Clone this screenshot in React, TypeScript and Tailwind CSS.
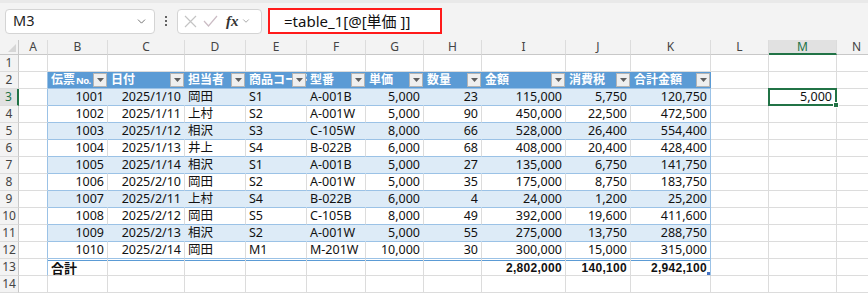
import { ChevronDown } from "lucide-react";

const COLS = [
  { k: "A", w: "w-[29px]" },
  { k: "B", w: "w-[60px]" },
  { k: "C", w: "w-[77px]" },
  { k: "D", w: "w-[61px]" },
  { k: "E", w: "w-[61px]" },
  { k: "F", w: "w-[59px]" },
  { k: "G", w: "w-[58px]" },
  { k: "H", w: "w-[58px]" },
  { k: "I", w: "w-[84px]" },
  { k: "J", w: "w-[65px]" },
  { k: "K", w: "w-[80px]" },
  { k: "L", w: "w-[58px]" },
  { k: "M", w: "w-[68px]" },
  { k: "N", w: "w-[40px]" },
];

const HEAD = ["伝票", "日付", "担当者", "商品コード", "型番", "単価", "数量", "金額", "消費税", "合計金額"];

// right aligned columns inside the table (B..K => 0..9)
const RIGHT = [true, true, false, false, false, true, true, true, true, true];

const DATA = [
  ["1001", "2025/1/10", "岡田", "S1", "A-001B", "5,000", "23", "115,000", "5,750", "120,750"],
  ["1002", "2025/1/11", "上村", "S2", "A-001W", "5,000", "90", "450,000", "22,500", "472,500"],
  ["1003", "2025/1/12", "相沢", "S3", "C-105W", "8,000", "66", "528,000", "26,400", "554,400"],
  ["1004", "2025/1/13", "井上", "S4", "B-022B", "6,000", "68", "408,000", "20,400", "428,400"],
  ["1005", "2025/1/14", "相沢", "S1", "A-001B", "5,000", "27", "135,000", "6,750", "141,750"],
  ["1006", "2025/2/10", "岡田", "S2", "A-001W", "5,000", "35", "175,000", "8,750", "183,750"],
  ["1007", "2025/2/11", "上村", "S4", "B-022B", "6,000", "4", "24,000", "1,200", "25,200"],
  ["1008", "2025/2/12", "岡田", "S5", "C-105B", "8,000", "49", "392,000", "19,600", "411,600"],
  ["1009", "2025/2/13", "相沢", "S2", "A-001W", "5,000", "55", "275,000", "13,750", "288,750"],
  ["1010", "2025/2/14", "岡田", "M1", "M-201W", "10,000", "30", "300,000", "15,000", "315,000"],
];

const TOTAL = ["合計", "", "", "", "", "", "", "2,802,000", "140,100", "2,942,100"];

const FONT = "font-['Noto_Sans','Noto_Sans_CJK_JP',sans-serif]";

function RowHead({ n, active }: { n: number; active?: boolean }) {
  return (
    <div
      className={`w-[19px] shrink-0 flex items-center justify-center text-[12px] leading-none border-b border-[#dcdcdc] ${
        active ? "bg-[#e1e1e1] text-[#217346] border-r-2 border-r-[#217346]" : "bg-[#f3f3f3] text-[#444] border-r border-r-[#c8c8c8]"
      }`}
    >
      {n}
    </div>
  );
}

function FilterBtn() {
  return (
    <div className="absolute right-[1px] top-[1px] w-[14px] h-[14px] bg-[#efefef] border border-[#b4b4b4] flex items-center justify-center">
      <svg width="7" height="4" viewBox="0 0 7 4">
        <path d="M0 0h7L3.5 4z" fill="#5f5f5f" />
      </svg>
    </div>
  );
}

function Cell({ row, col, text }: { row: number; col: number; text?: string }) {
  const t = col - 1; // table index
  const inTable = t >= 0 && t <= 9 && row >= 2 && row <= 13;
  const w = COLS[col].w;
  if (inTable) {
    if (row === 2) {
      return (
        <div className={`${w} shrink-0 relative bg-[#5b9bd5] text-white font-bold text-[12px] leading-none pl-[3px] flex items-center overflow-hidden whitespace-nowrap border-b border-[#9bc2e6]`}>
          {HEAD[t]}
          {t === 0 && <span className="text-[9.5px] tracking-[-0.6px] ml-[1px] mt-[1px]">No.</span>}
          <FilterBtn />
        </div>
      );
    }
    const band = row % 2 === 1 && row <= 11;
    const right = t === 9 ? "border-r border-r-[#9bc2e6]" : band ? "border-r border-r-[#ddebf7]" : "border-r border-r-[#dcdcdc]";
    const bottom = row === 13 ? "border-b border-b-[#dcdcdc]" : "border-b border-b-[#9bc2e6]";
    const isTotal = row === 13;
    const alignRight = RIGHT[t] && !(isTotal && t === 0);
    return (
      <div
        className={`${w} shrink-0 relative px-[3px] flex items-center overflow-hidden whitespace-nowrap leading-none ${right} ${bottom} ${
          band ? "bg-[#ddebf7]" : "bg-white"
        } ${alignRight ? "justify-end" : "justify-start"} ${
          isTotal && t > 0
            ? "font-['Liberation_Sans',sans-serif] font-bold text-[12px] tracking-[0.3px] pt-[2px]"
            : isTotal
            ? "font-bold text-[13px] pt-[2px]"
            : "text-[12.5px]"
        } text-[#111]`}
      >
        {text}
        {isTotal && <div className="absolute left-0 right-0 top-[1px] h-px bg-[#5b9bd5]" />}
        {isTotal && t === 9 && <div className="absolute right-0 bottom-0 w-[3px] h-[3px] bg-[#4472c4]" />}
      </div>
    );
  }
  const blueRight = col === 0 && row >= 2 && row <= 13;
  if (col === 12 && row === 3) {
    return (
      <div className={`${w} shrink-0 relative px-[4px] flex items-center justify-end text-[12.5px] leading-none text-[#111] border-r border-b border-[#dcdcdc]`}>
        5,000
        <div className="absolute -left-[1px] -top-[1px] -right-[1px] -bottom-[1px] border-2 border-[#217346]" />
        <div className="absolute -right-[3px] -bottom-[3px] w-[6px] h-[6px] bg-[#217346] border border-white" />
      </div>
    );
  }
  return (
    <div
      className={`${w} shrink-0 border-b border-b-[#dcdcdc] border-r ${blueRight ? "border-r-[#9bc2e6]" : "border-r-[#dcdcdc]"}`}
    />
  );
}

function GridRow({ n }: { n: number }) {
  const vals = n === 13 ? TOTAL : n >= 3 && n <= 12 ? DATA[n - 3] : null;
  return (
    <div className="flex h-[17px]">
      <RowHead n={n} active={n === 3} />
      {COLS.map((c, i) => (
        <Cell key={c.k} row={n} col={i} text={vals && i >= 1 && i <= 10 ? vals[i - 1] : undefined} />
      ))}
    </div>
  );
}

export default function App() {
  return (
    <div className={`w-[868px] h-[296px] overflow-hidden bg-white ${FONT} text-[#111]`}>
      {/* formula bar */}
      <div className="h-10 bg-[#f3f3f3] border-t-[3px] border-t-[#e9e9e9] flex items-center pl-[5px] pb-[1px]">
        <div className="w-[150px] h-[25px] bg-white border border-[#d4d4d4] rounded-[4px] flex items-center justify-between pl-[7px] pr-[6px]">
          <span className="text-[14.5px] text-[#222]">M3</span>
          <ChevronDown size={13} className="text-[#555]" strokeWidth={1.5} />
        </div>
        <div className="w-[22px] flex flex-col items-center gap-[2px]">
          <span className="w-[2px] h-[2px] bg-[#333] rounded-full" />
          <span className="w-[2px] h-[2px] bg-[#333] rounded-full" />
          <span className="w-[2px] h-[2px] bg-[#333] rounded-full" />
        </div>
        <div className="w-[85px] h-[25px] bg-white border border-[#d4d4d4] rounded-[4px] flex items-center pl-[6px] gap-[6px]">
          <svg width="13" height="13" viewBox="0 0 13 13">
            <path d="M1 1l11 11M12 1L1 12" stroke="#c4c4c4" strokeWidth="1.2" />
          </svg>
          <svg width="15" height="13" viewBox="0 0 15 13">
            <path d="M1 6l4.5 5L14 1" stroke="#cbbcc4" strokeWidth="1.2" fill="none" />
          </svg>
          <span className="font-['Liberation_Serif',serif] italic font-bold text-[15px] text-[#333] leading-none ml-[2px]">fx</span>
          <ChevronDown size={10} className="text-[#777] -ml-[4px]" strokeWidth={1.5} />
        </div>
        <div className="ml-[6px] w-[174px] h-[26px] border-2 border-[#ff1a1a] bg-white flex items-center pl-[14px] text-[15px] text-[#111]">
          =table_1[@[単価 ]]
        </div>
      </div>
      {/* column header */}
      <div className="flex h-[15px]">
        <div className="w-[19px] shrink-0 relative bg-[#f3f3f3] border-r border-b border-[#c8c8c8]">
          <svg className="absolute right-[2px] bottom-[2px]" width="8" height="8" viewBox="0 0 8 8">
            <path d="M8 0v8H0z" fill="#d6d6d6" />
          </svg>
        </div>
        {COLS.map((c) => (
          <div
            key={c.k}
            className={`${c.w} shrink-0 flex items-center justify-center text-[12px] leading-none border-r border-[#dcdcdc] ${
              c.k === "M" ? "bg-[#e1e1e1] text-[#217346] border-b-2 border-b-[#217346]" : "bg-[#f3f3f3] text-[#444] border-b border-b-[#c8c8c8]"
            }`}
          >
            {c.k}
          </div>
        ))}
      </div>
      {Array.from({ length: 14 }, (_, i) => (
        <GridRow key={i} n={i + 1} />
      ))}
    </div>
  );
}
